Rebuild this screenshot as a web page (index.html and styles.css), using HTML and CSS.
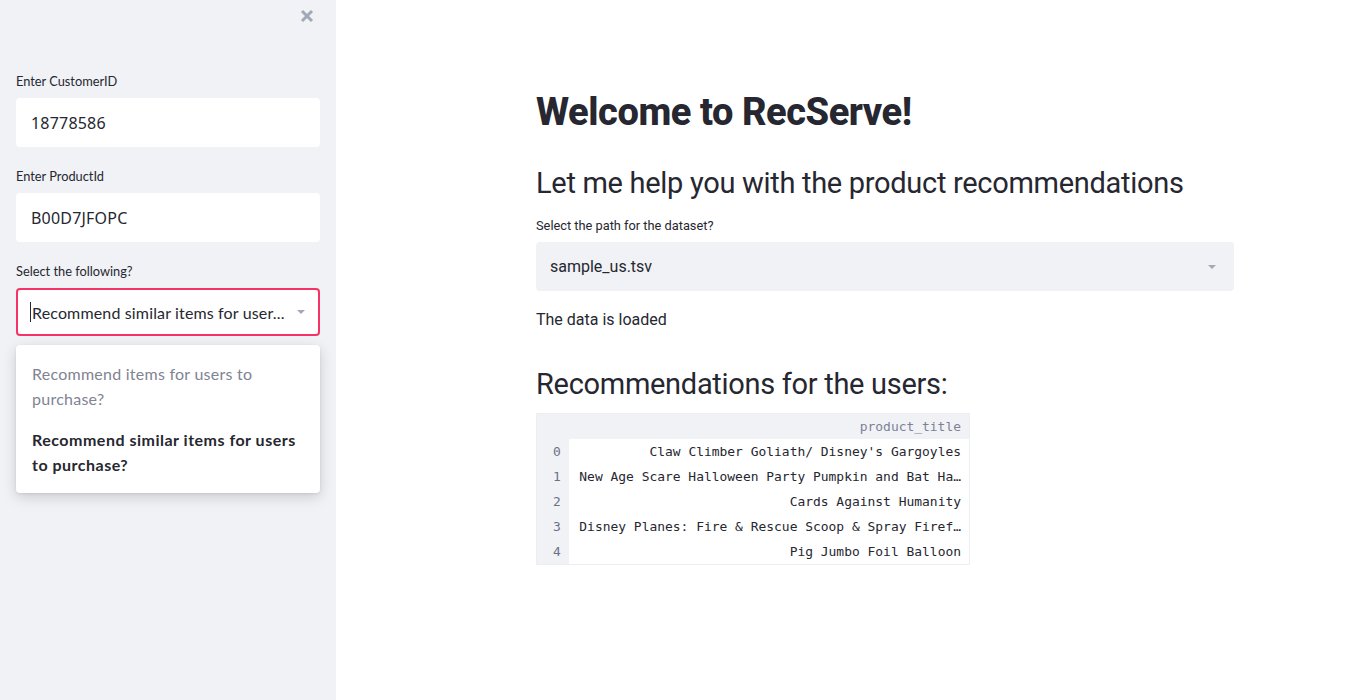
FILE: index.html
```html
<!DOCTYPE html>
<html>
<head>
<meta charset="utf-8">
<link rel="stylesheet" href="styles.css">
</head>
<body>
<aside class="sidebar">
  <div class="sb-top">
    <svg class="close" width="14" height="14" viewBox="0 0 14 14"><path d="M2 2 L12 12 M12 2 L2 12" stroke="#a3a8b8" stroke-width="3" stroke-linecap="butt"/></svg>
  </div>
  <div class="field first">
    <label class="lbl">Enter CustomerID</label>
    <div class="input">18778586</div>
  </div>
  <div class="field">
    <label class="lbl">Enter ProductId</label>
    <div class="input">B00D7JFOPC</div>
  </div>
  <div class="field">
    <label class="lbl">Select the following?</label>
    <div class="select focused">
      <span class="caret"></span><span class="sel-text">Recommend similar items for user...</span>
      <svg class="arrow" width="8" height="4" viewBox="0 0 8 4"><path d="M0 0 H8 L4 4 Z" fill="#a3a8b8"/></svg>
    </div>
    <div class="menu">
      <div class="opt muted">Recommend items for users to purchase?</div>
      <div class="opt active">Recommend similar items for users to purchase?</div>
    </div>
  </div>
</aside>
<main class="main">
  <div class="block">
    <h1 class="title">Welcome to RecServe!</h1>
    <h2 class="sub">Let me help you with the product recommendations</h2>
    <label class="mlbl">Select the path for the dataset?</label>
    <div class="mselect">
      <span>sample_us.tsv</span>
      <svg width="8" height="4" viewBox="0 0 8 4"><path d="M0 0 H8 L4 4 Z" fill="#a3a8b8"/></svg>
    </div>
    <p class="msg">The data is loaded</p>
    <h2 class="sub sub2">Recommendations for the users:</h2>
    <div class="table">
      <div class="row head"><div class="idx"></div><div class="cell hcell">product_title</div></div>
      <div class="row"><div class="idx">0</div><div class="cell">Claw Climber Goliath/ Disney's Gargoyles</div></div>
      <div class="row"><div class="idx">1</div><div class="cell">New Age Scare Halloween Party Pumpkin and Bat Ha…</div></div>
      <div class="row"><div class="idx">2</div><div class="cell">Cards Against Humanity</div></div>
      <div class="row"><div class="idx">3</div><div class="cell">Disney Planes: Fire &amp; Rescue Scoop &amp; Spray Firef…</div></div>
      <div class="row"><div class="idx">4</div><div class="cell">Pig Jumbo Foil Balloon</div></div>
    </div>
  </div>
</main>
</body>
</html>
```

FILE: styles.css
```css
* { box-sizing: border-box; }
html, body { margin: 0; padding: 0; }
body {
  display: flex;
  height: 700px;
  overflow: hidden;
  font-family: "Lato", "Noto Sans", sans-serif;
  color: #262730;
  background: #ffffff;
}
.sidebar {
  width: 336px;
  flex: 0 0 336px;
  background: #f0f2f6;
  padding: 0 16px;
  display: flex;
  flex-direction: column;
}
.sb-top {
  height: 32px;
  display: flex;
  justify-content: flex-end;
  align-items: center;
  padding-right: 6px;
  padding-top: 0;
}
.field { display: flex; flex-direction: column; }
.field.first { margin-top: 41px; }
.field + .field { margin-top: 21px; }
.lbl {
  font-size: 12.8px;
  line-height: 16px;
  height: 18px;
  margin-bottom: 7px;
  color: #262730;
}
.input {
  height: 49px;
  background: #fff;
  border-radius: 4px;
  padding: 0 15px;
  display: flex;
  align-items: center;
  font-size: 16px;
  font-family: "Noto Sans", sans-serif;
  letter-spacing: 0.2px;
}
.select {
  height: 48px;
  background: #fff;
  border: 2px solid #f63366;
  border-radius: 4px;
  padding: 0 13px 0 12px;
  display: flex;
  align-items: center;
  font-size: 16px;
  white-space: nowrap;
  letter-spacing: 0.15px;
}
.caret { width: 1px; height: 20px; background: #262730; margin-right: 1px; }
.sel-text { flex: 1; overflow: hidden; }
.arrow { margin-left: 8px; }
.menu {
  margin-top: 9px;
  background: #fff;
  border-radius: 4px;
  box-shadow: 0 4px 14px rgba(0,0,0,0.16), 0 1px 3px rgba(0,0,0,0.08);
  padding: 16px 16px 16px;
  font-size: 16px;
  line-height: 25px;
}
.opt.muted { color: #7f8394; letter-spacing: 0.25px; }
.opt.active { font-weight: 700; margin-top: 16px; color: #262730; letter-spacing: 0.5px; }

.main {
  flex: 1;
  padding-left: 200px;
}
.block { width: 698px; display: flex; flex-direction: column; }
.title {
  margin: 86px 0 0;
  font-size: 38px;
  line-height: 52px;
  font-weight: 800;
  font-family: "Roboto", sans-serif;
  letter-spacing: -0.45px;
}
.sub {
  margin: 26px 0 0;
  font-family: "Roboto", sans-serif;
  font-weight: 400;
  font-size: 29px;
  line-height: 38px;
  letter-spacing: -0.3px;
}
.mlbl {
  margin-top: 16px;
  font-family: "Roboto", sans-serif;
  font-size: 12.8px;
  line-height: 16px;
  height: 18px;
}
.mselect {
  margin-top: 6px;
  height: 49px;
  background: #f0f2f6;
  border-radius: 4px;
  padding: 0 18px 0 14px;
  display: flex;
  align-items: center;
  justify-content: space-between;
  font-family: "Roboto", sans-serif;
  font-size: 16px;
}
.msg {
  margin: 17px 0 0;
  font-family: "Roboto", sans-serif;
  font-size: 16px;
  line-height: 24px;
}
.sub2 { margin-top: 33px; }
.table {
  margin-top: 10px;
  width: 434px;
  border: 1px solid #eceef2;
  font-family: "DejaVu Sans Mono", monospace;
  font-size: 12.95px;
}
.row { display: flex; height: 25px; }
.idx {
  width: 32px;
  background: #f0f2f6;
  color: #6b7185;
  padding-left: 16px;
  display: flex;
  align-items: center;
}
.cell {
  flex: 1;
  text-align: right;
  padding-right: 8px;
  display: flex;
  align-items: center;
  justify-content: flex-end;
  white-space: nowrap;
}
.head { background: #f0f2f6; }
.hcell { color: #7d8296; }
```
